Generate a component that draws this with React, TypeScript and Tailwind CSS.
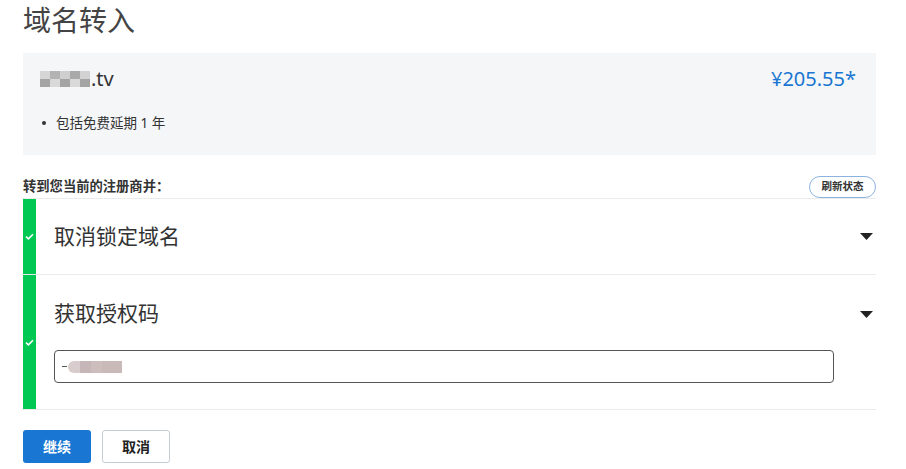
const FONT = { fontFamily: "'Noto Sans', 'Noto Sans CJK SC', sans-serif" };

// blurred (masked) domain name in the summary box
function MaskedName() {
  const cells = ["#d6d6d6", "#b3b3b3", "#cfcfcf", "#a9a9a9", "#d2d2d2"];
  return (
    <div className="flex flex-col blur-[0.6px] mr-[1px]">
      <div className="flex">
        {cells.map((c, i) => (
          <div key={i} className="w-[10px] h-[8px]" style={{ backgroundColor: c }} />
        ))}
      </div>
      <div className="flex">
        {cells.map((c, i) => (
          <div key={i} className="w-[10px] h-[8px]" style={{ backgroundColor: i % 2 ? "#d9d9d9" : "#a4a4a4" }} />
        ))}
      </div>
    </div>
  );
}

function Caret() {
  return (
    <svg width="13" height="7" viewBox="0 0 13 7" className="shrink-0">
      <path d="M0 0 H13 L6.5 7 Z" fill="#222" />
    </svg>
  );
}

function Check() {
  return (
    <svg width="9" height="7" viewBox="0 0 9 7">
      <path d="M1 3.6 L3.4 5.8 L8 1.2" stroke="#fff" strokeWidth="1.6" fill="none" />
    </svg>
  );
}

function Step({ title, children, tall }: { title: string; children?: React.ReactNode; tall?: boolean }) {
  return (
    <div className="flex border-b border-[#ebebeb]">
      <div className="w-[13px] bg-[#00c853] flex items-center justify-center shrink-0">
        <Check />
      </div>
      <div className={tall ? "flex-1 pl-[18px] pr-[3px] pt-[25px] pb-[26px]" : "flex-1 pl-[18px] pr-[3px] h-[75px] flex items-center"}>
        <div className="flex items-center justify-between w-full h-[28px]">
          <span className="text-[21px] text-[#333]">{title}</span>
          <Caret />
        </div>
        {children}
      </div>
    </div>
  );
}

export default function App() {
  return (
    <div className="w-[906px] h-[469px] bg-white overflow-hidden px-[23px] pr-[30px]" style={FONT}>
      <h1 className="text-[28px] leading-[40px] text-[#444] font-normal">域名转入</h1>

      {/* summary box */}
      <div className="mt-[13px] h-[102px] bg-[#f5f6f8] pl-[17px] pr-[20px] pt-[14px]">
        <div className="flex items-center justify-between h-[24px]">
          <div className="flex items-center">
            <MaskedName />
            <span className="text-[20px] text-[#333] leading-[24px]">.tv</span>
          </div>
          <span className="text-[20px] text-[#1976d2] leading-[24px]">¥205.55*</span>
        </div>
        <ul className="mt-[22px] flex items-center text-[13.5px] text-[#333]">
          <li className="flex items-center">
            <span className="w-[4px] h-[4px] rounded-full bg-[#333] ml-[2px] mr-[10px]" />
            包括免费延期 1 年
          </li>
        </ul>
      </div>

      {/* transfer steps */}
      <div className="mt-[21px] flex items-center justify-between h-[22px]">
        <span className="text-[13.3px] font-bold text-[#333]">转到您当前的注册商并：</span>
        <button className="w-[67px] h-[22px] rounded-full border border-[#8cb3e0] text-[10.5px] font-bold text-[#333] bg-white">
          刷新状态
        </button>
      </div>

      <div className="border-t border-[#ebebeb]">
        <Step title="取消锁定域名" />
        <Step title="获取授权码" tall>
          <div className="mt-[22px] w-[780px] h-[33px] rounded-[4px] border border-[#555] flex items-center pl-[7px]">
            <span className="w-[5px] h-px bg-[#555] mr-[1px]" />
            <div className="flex blur-[0.6px]">
              <div className="w-[12px] h-[12px] bg-[#d8cccc] rounded-l-full" />
              <div className="w-[11px] h-[12px] bg-[#c7b6b8]" />
              <div className="w-[11px] h-[12px] bg-[#cdbdbd]" />
              <div className="w-[20px] h-[12px] bg-[#c9b9b9]" />
            </div>
          </div>
        </Step>
      </div>

      <div className="mt-[20px] flex gap-[11px]">
        <button className="w-[68px] h-[33px] rounded-[3px] bg-[#1976d2] text-white text-[14px] font-bold">继续</button>
        <button className="w-[68px] h-[33px] rounded-[3px] border border-[#c8cdd2] bg-white text-[#222] text-[14px] font-bold">
          取消
        </button>
      </div>
    </div>
  );
}
